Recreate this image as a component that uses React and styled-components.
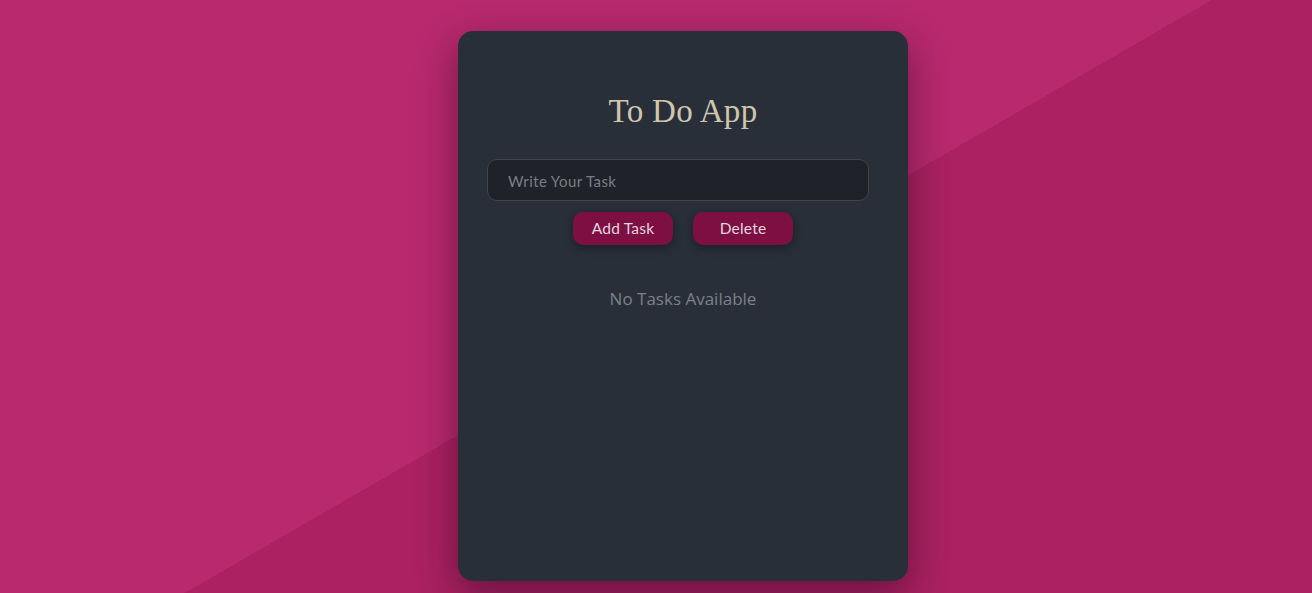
import React, { useState } from 'react';
import styled, { createGlobalStyle } from 'styled-components';

const GlobalStyle = createGlobalStyle`
  html, body {
    margin: 0;
    padding: 0;
    height: 100%;
  }

  body {
    background: linear-gradient(150deg, #b8296e 51.8%, #ab2161 51.8%);
    font-family: "Open Sans", "Liberation Sans", sans-serif;
    overflow: hidden;
  }
`;

const Page = styled.div`
  min-height: 100vh;
  display: flex;
  justify-content: center;
  align-items: flex-start;
  padding: 31px 0 0 54px;
  box-sizing: border-box;
`;

const Card = styled.div`
  width: 450px;
  height: 550px;
  box-sizing: border-box;
  background: #282f39;
  border-radius: 15px;
  box-shadow: 0 14px 40px rgba(20, 0, 20, 0.45);
  padding: 60px 39px 0 29px;
  display: flex;
  flex-direction: column;
  align-items: center;
`;

const Title = styled.h1`
  margin: 0;
  width: 100%;
  text-align: center;
  font-family: "Liberation Serif", "DejaVu Serif", serif;
  font-weight: 400;
  font-size: 33px;
  line-height: 40px;
  letter-spacing: 0.3px;
  color: #cfc6ad;
  padding-left: 10px;
  box-sizing: border-box;
`;

const TaskInput = styled.input`
  margin-top: 28px;
  width: 382px;
  height: 42px;
  box-sizing: border-box;
  border-radius: 10px;
  border: 1px solid #41454b;
  background: #1f2229;
  padding: 2px 20px 0;
  font-family: "Lato", "Noto Sans", sans-serif;
  font-size: 15px;
  letter-spacing: 0.4px;
  color: #c9c9c9;
  outline: none;

  &::placeholder {
    color: #7a7e84;
  }
`;

const ButtonRow = styled.div`
  margin-top: 11px;
  display: flex;
  gap: 20px;
  padding-left: 10px;
`;

const ActionButton = styled.button`
  width: 100px;
  height: 33px;
  padding: 0 0 2px;
  border: none;
  border-radius: 10px;
  background: #7d0f42;
  color: #e2d6df;
  font-family: "Lato", "Noto Sans", sans-serif;
  font-size: 15.5px;
  letter-spacing: 0.2px;
  cursor: pointer;
  box-shadow: 0 3px 8px rgba(0, 0, 0, 0.35);
`;

const EmptyText = styled.p`
  margin: 42px 0 0;
  padding-left: 10px;
  font-family: "Open Sans", "Liberation Sans", sans-serif;
  font-size: 17px;
  line-height: 24px;
  color: #7d8087;
`;

export default function App() {
  const [task, setTask] = useState('');
  const [tasks, setTasks] = useState([]);

  const addTask = () => {
    if (!task.trim()) return;
    setTasks([...tasks, task.trim()]);
    setTask('');
  };

  return (
    <>
      <GlobalStyle />
      <Page>
        <Card>
          <Title>To Do App</Title>
          <TaskInput
            placeholder="Write Your Task"
            value={task}
            onChange={(e) => setTask(e.target.value)}
          />
          <ButtonRow>
            <ActionButton onClick={addTask}>Add Task</ActionButton>
            <ActionButton onClick={() => setTasks([])}>Delete</ActionButton>
          </ButtonRow>
          {tasks.length === 0 ? (
            <EmptyText>No Tasks Available</EmptyText>
          ) : (
            tasks.map((t, i) => <EmptyText key={i}>{t}</EmptyText>)
          )}
        </Card>
      </Page>
    </>
  );
}
